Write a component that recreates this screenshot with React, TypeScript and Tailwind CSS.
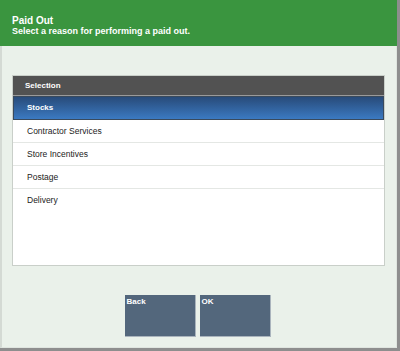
import React from "react";

const rows = ["Contractor Services", "Store Incentives", "Postage", "Delivery"];

export default function App() {
  return (
    <div
      className="w-[400px] h-[351px] flex flex-col bg-[#eaf1ea] border-r-[3px] border-b-[3px] border-[#8e8e8e] overflow-hidden"
      style={{ fontFamily: '"Liberation Sans", Arial, sans-serif' }}
    >
      <div className="h-[46px] bg-[#3a953f] px-[12px] pt-[15px] text-white font-bold shrink-0">
        <div className="text-[10px] leading-[11px]">Paid Out</div>
        <div className="text-[9px] leading-[11px]">Select a reason for performing a paid out.</div>
      </div>
      <div className="flex-1 flex flex-col border-l-2 border-[#d4dad4] border-b border-b-[#dfe5df] border-r border-r-[#dfe5df] pl-[10px] pr-[11px] pt-[29px]">
        <div className="h-[191px] bg-white border border-[#c9cfc9] flex flex-col">
          <div className="h-[20px] bg-[#525252] text-white font-bold text-[8px] flex items-center pl-[12px] border-b border-[#9a9a9a]">
            Selection
          </div>
          <div className="h-[24px] bg-gradient-to-b from-[#284b7a] to-[#3b7ac2] border border-[#3a4a5c] text-white font-bold text-[8px] flex items-center pl-[13px]">
            Stocks
          </div>
          {rows.map((r, i) => (
            <div
              key={r}
              className={
                i < rows.length - 1
                  ? "h-[23px] border-b border-[#e4e7e4] text-[#222] text-[8.5px] flex items-center pl-[14px] shrink-0"
                  : "h-[23px] text-[#222] text-[8.5px] flex items-center pl-[14px] shrink-0"
              }
            >
              {r}
            </div>
          ))}
        </div>
        <div className="flex justify-center gap-[4px] mt-[29px] pr-[2px]">
          <div className="w-[71px] h-[42px] bg-[#53677c] border-r border-b border-[#aab4bd] text-white font-bold text-[8px] px-[2px] pt-[2px] leading-[10px]">
            Back
          </div>
          <div className="w-[71px] h-[42px] bg-[#53677c] border-r border-b border-[#aab4bd] text-white font-bold text-[8px] px-[2px] pt-[2px] leading-[10px]">
            OK
          </div>
        </div>
      </div>
    </div>
  );
}
